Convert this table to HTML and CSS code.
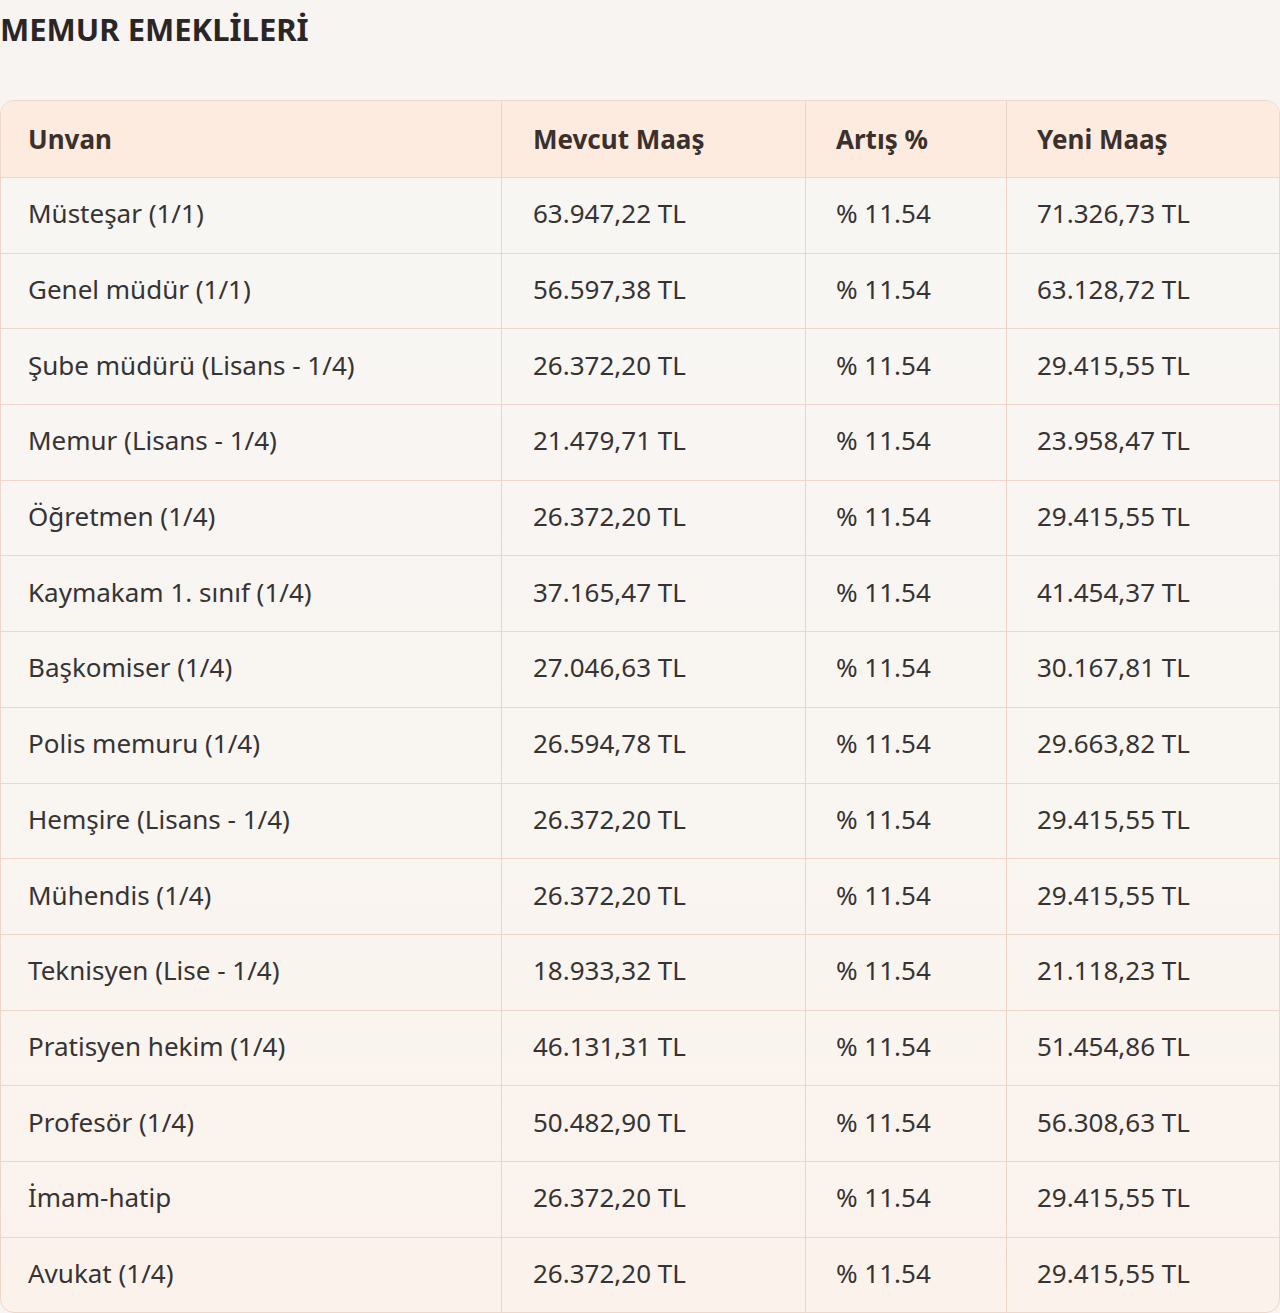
FILE: index.html
```html
<!DOCTYPE html>
<html lang="tr">
<head>
<meta charset="utf-8">
<title>Memur Emeklileri</title>
<link rel="stylesheet" href="styles.css">
</head>
<body>
<h2 class="title">MEMUR EMEKLİLERİ</h2>
<table class="salary">
  <thead>
    <tr><th>Unvan</th><th>Mevcut Maaş</th><th>Artış %</th><th>Yeni Maaş</th></tr>
  </thead>
  <tbody>
    <tr><td>Müsteşar (1/1)</td><td>63.947,22 TL</td><td>% 11.54</td><td>71.326,73 TL</td></tr>
    <tr><td>Genel müdür (1/1)</td><td>56.597,38 TL</td><td>% 11.54</td><td>63.128,72 TL</td></tr>
    <tr><td>Şube müdürü (Lisans - 1/4)</td><td>26.372,20 TL</td><td>% 11.54</td><td>29.415,55 TL</td></tr>
    <tr><td>Memur (Lisans - 1/4)</td><td>21.479,71 TL</td><td>% 11.54</td><td>23.958,47 TL</td></tr>
    <tr><td>Öğretmen (1/4)</td><td>26.372,20 TL</td><td>% 11.54</td><td>29.415,55 TL</td></tr>
    <tr><td>Kaymakam 1. sınıf (1/4)</td><td>37.165,47 TL</td><td>% 11.54</td><td>41.454,37 TL</td></tr>
    <tr><td>Başkomiser (1/4)</td><td>27.046,63 TL</td><td>% 11.54</td><td>30.167,81 TL</td></tr>
    <tr><td>Polis memuru (1/4)</td><td>26.594,78 TL</td><td>% 11.54</td><td>29.663,82 TL</td></tr>
    <tr><td>Hemşire (Lisans - 1/4)</td><td>26.372,20 TL</td><td>% 11.54</td><td>29.415,55 TL</td></tr>
    <tr><td>Mühendis (1/4)</td><td>26.372,20 TL</td><td>% 11.54</td><td>29.415,55 TL</td></tr>
    <tr><td>Teknisyen (Lise - 1/4)</td><td>18.933,32 TL</td><td>% 11.54</td><td>21.118,23 TL</td></tr>
    <tr><td>Pratisyen hekim (1/4)</td><td>46.131,31 TL</td><td>% 11.54</td><td>51.454,86 TL</td></tr>
    <tr><td>Profesör (1/4)</td><td>50.482,90 TL</td><td>% 11.54</td><td>56.308,63 TL</td></tr>
    <tr><td>İmam-hatip</td><td>26.372,20 TL</td><td>% 11.54</td><td>29.415,55 TL</td></tr>
    <tr><td>Avukat (1/4)</td><td>26.372,20 TL</td><td>% 11.54</td><td>29.415,55 TL</td></tr>
  </tbody>
</table>
</body>
</html>
```
FILE: styles.css
```css
html, body {
  margin: 0;
  padding: 0;
  background: #f7f4f2;
  font-family: "Noto Sans", "Open Sans", sans-serif;
  color: #333;
}

.title {
  margin: 0;
  padding: 10px 0 0 0;
  height: 90px;
  box-sizing: border-box;
  font-size: 31px;
  font-weight: 700;
  line-height: 38px;
  color: #2a2626;
}

.salary {
  width: 1280px;
  border-collapse: separate;
  border-spacing: 0;
  margin-top: 10px;
  border: 1px solid #efd6cb;
  border-radius: 14px;
  overflow: hidden;
  background: linear-gradient(#f8f6f3 0%, #f9f5f1 60%, #fcf2ec 100%);
  table-layout: fixed;
  font-size: 26px;
}

.salary th,
.salary td {
  box-sizing: border-box;
  text-align: left;
  padding: 0 0 0 30px;
  border-left: 1px solid #ecd3c8;
  border-top: 1px solid #efd5ca;
}

.salary th:nth-child(1), .salary td:nth-child(1) { width: 500px; }
.salary th:nth-child(2), .salary td:nth-child(2) { width: 304px; }
.salary th:nth-child(3), .salary td:nth-child(3) { width: 201px; }

.salary th:nth-child(2),
.salary td:nth-child(2) {
  padding-left: 31px;
}

.salary th:first-child,
.salary td:first-child {
  border-left: none;
  padding-left: 27px;
}

.salary thead th {
  background: #fdebe0;
  height: 76px;
  border-top: none;
  font-weight: 700;
  color: #3a302c;
}

.salary tbody td {
  height: 75.7px;
  padding-bottom: 4px;
  color: #353333;
}
```
